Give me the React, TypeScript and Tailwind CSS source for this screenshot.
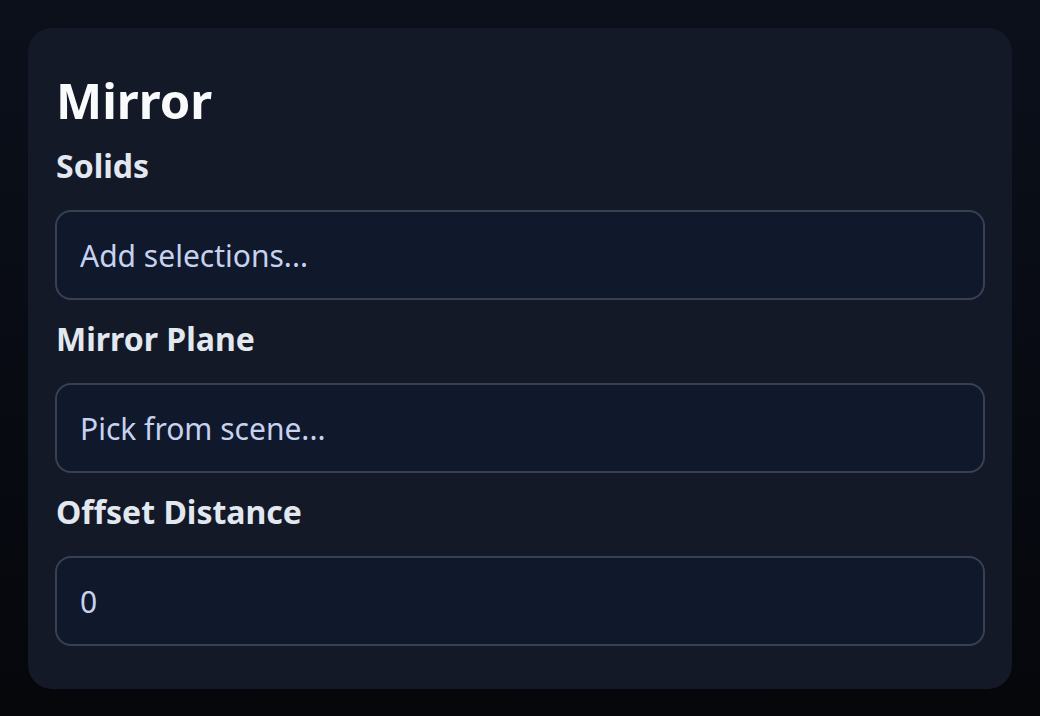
import React from 'react'

const fields = [
  { label: 'Solids', placeholder: 'Add selections...' },
  { label: 'Mirror Plane', placeholder: 'Pick from scene...' },
  { label: 'Offset Distance', value: '0' },
]

export default function App() {
  return (
    <div
      className="min-h-screen w-full bg-gradient-to-b from-[#0c101b] to-[#05070b] p-[28px]"
      style={{ fontFamily: '"Noto Sans", "Open Sans", sans-serif' }}
    >
      {/* Mirror feature panel */}
      <div className="flex flex-col rounded-[24px] bg-[#141927] px-[27px] pt-[48px] pb-[43px]">
        <h1 className="pl-[1px] text-[49px] leading-none font-bold text-[#f8fafc]">Mirror</h1>

        <div className="mt-[21px] flex flex-col gap-[19px]">
          {fields.map((f) => (
            <div key={f.label} className="flex flex-col">
              <label className="pl-[1px] text-[32px] leading-[40px] font-bold text-[#e2e8f0]">{f.label}</label>
              <input
                readOnly
                placeholder={f.placeholder}
                defaultValue={f.value}
                className="mt-[24px] h-[90px] w-full rounded-[16px] border-2 border-[#384152] bg-[#10182b] px-[23px] text-[30px] text-[#c7d2f0] placeholder:text-[#c7d2f0] outline-none"
              />
            </div>
          ))}
        </div>
      </div>
    </div>
  )
}
